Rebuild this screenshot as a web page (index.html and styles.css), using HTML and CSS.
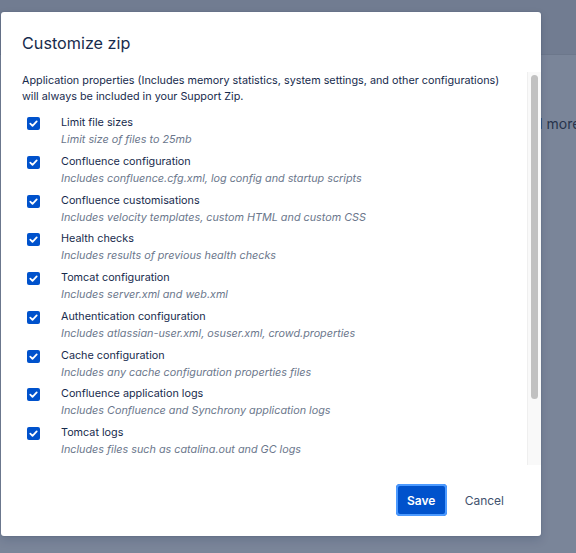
FILE: index.html
```html
<!DOCTYPE html>
<html>
<head>
<meta charset="utf-8">
<link rel="stylesheet" href="styles.css">
</head>
<body>
<div class="page">
  <div class="page-header"></div>
  <div class="page-body">
    <span class="read-more">Read more</span>
  </div>
</div>
<div class="modal">
  <div class="modal-header">Customize zip</div>
  <div class="modal-body">
    <div class="scroll-content">
      <p class="intro">Application properties (Includes memory statistics, system settings, and other configurations) will always be included in your Support Zip.</p>
      <ul class="options">
        <li class="option"><span class="cb"><svg viewBox="0 0 13 13"><path d="M3.3 6.7 L5.5 8.8 L9.7 4.4" fill="none" stroke="#fff" stroke-width="1.8" stroke-linecap="round" stroke-linejoin="round"/></svg></span><div class="text"><div class="label">Limit file sizes</div><div class="desc">Limit size of files to 25mb</div></div></li>
        <li class="option"><span class="cb"><svg viewBox="0 0 13 13"><path d="M3.3 6.7 L5.5 8.8 L9.7 4.4" fill="none" stroke="#fff" stroke-width="1.8" stroke-linecap="round" stroke-linejoin="round"/></svg></span><div class="text"><div class="label">Confluence configuration</div><div class="desc">Includes confluence.cfg.xml, log config and startup scripts</div></div></li>
        <li class="option"><span class="cb"><svg viewBox="0 0 13 13"><path d="M3.3 6.7 L5.5 8.8 L9.7 4.4" fill="none" stroke="#fff" stroke-width="1.8" stroke-linecap="round" stroke-linejoin="round"/></svg></span><div class="text"><div class="label">Confluence customisations</div><div class="desc">Includes velocity templates, custom HTML and custom CSS</div></div></li>
        <li class="option"><span class="cb"><svg viewBox="0 0 13 13"><path d="M3.3 6.7 L5.5 8.8 L9.7 4.4" fill="none" stroke="#fff" stroke-width="1.8" stroke-linecap="round" stroke-linejoin="round"/></svg></span><div class="text"><div class="label">Health checks</div><div class="desc">Includes results of previous health checks</div></div></li>
        <li class="option"><span class="cb"><svg viewBox="0 0 13 13"><path d="M3.3 6.7 L5.5 8.8 L9.7 4.4" fill="none" stroke="#fff" stroke-width="1.8" stroke-linecap="round" stroke-linejoin="round"/></svg></span><div class="text"><div class="label">Tomcat configuration</div><div class="desc">Includes server.xml and web.xml</div></div></li>
        <li class="option"><span class="cb"><svg viewBox="0 0 13 13"><path d="M3.3 6.7 L5.5 8.8 L9.7 4.4" fill="none" stroke="#fff" stroke-width="1.8" stroke-linecap="round" stroke-linejoin="round"/></svg></span><div class="text"><div class="label">Authentication configuration</div><div class="desc">Includes atlassian-user.xml, osuser.xml, crowd.properties</div></div></li>
        <li class="option"><span class="cb"><svg viewBox="0 0 13 13"><path d="M3.3 6.7 L5.5 8.8 L9.7 4.4" fill="none" stroke="#fff" stroke-width="1.8" stroke-linecap="round" stroke-linejoin="round"/></svg></span><div class="text"><div class="label">Cache configuration</div><div class="desc">Includes any cache configuration properties files</div></div></li>
        <li class="option"><span class="cb"><svg viewBox="0 0 13 13"><path d="M3.3 6.7 L5.5 8.8 L9.7 4.4" fill="none" stroke="#fff" stroke-width="1.8" stroke-linecap="round" stroke-linejoin="round"/></svg></span><div class="text"><div class="label">Confluence application logs</div><div class="desc">Includes Confluence and Synchrony application logs</div></div></li>
        <li class="option"><span class="cb"><svg viewBox="0 0 13 13"><path d="M3.3 6.7 L5.5 8.8 L9.7 4.4" fill="none" stroke="#fff" stroke-width="1.8" stroke-linecap="round" stroke-linejoin="round"/></svg></span><div class="text"><div class="label">Tomcat logs</div><div class="desc">Includes files such as catalina.out and GC logs</div></div></li>
      </ul>
    </div>
    <div class="scrollbar"><div class="thumb"></div></div>
  </div>
  <div class="modal-footer">
    <button class="btn btn-primary">Save</button>
    <button class="btn btn-subtle">Cancel</button>
  </div>
</div>
</body>
</html>
```

FILE: styles.css
```css
* { box-sizing: border-box; }
html, body { margin: 0; padding: 0; }
body {
  width: 576px;
  height: 553px;
  overflow: hidden;
  font-family: Inter, "Noto Sans", sans-serif;
  color: #172b4d;
  background: #7a8599;
  position: relative;
}
.page { width: 576px; height: 553px; display: flex; flex-direction: column; }
.page-header { height: 55px; background: #717c91; border-bottom: 1px solid #6c778b; }
.page-body { flex: 1; background: #7a8599; padding: 58px 0 0 509px; white-space: nowrap; overflow: hidden; }
.read-more { font-size: 14px; color: #27344c; white-space: nowrap; }

.modal {
  position: absolute;
  left: 1px;
  top: 12px;
  width: 540px;
  height: 524px;
  background: #fff;
  border-radius: 3px;
  box-shadow: 0 0 2px rgba(9,30,66,0.2), 0 4px 10px rgba(9,30,66,0.15);
  display: flex;
  flex-direction: column;
}
.modal-header {
  padding: 20px 21px 18px;
  font-size: 16.2px;
  line-height: 22px;
  font-weight: 400;
  color: #172b4d;
  height: 60px;
}
.modal-body {
  height: 393px;
  display: flex;
  font-size: 10.8px;
  background: #fff;
}
.scroll-content {
  flex: 1;
  overflow: hidden;
  padding: 1px 18px 0 21px;
}
.scrollbar {
  width: 14px;
  flex: none;
  background: #f9f9f9;
  border-left: 1px solid #efefef;
  padding: 3px 3px 0 3px;
}
.thumb {
  height: 324px;
  background: #c1c1c1;
  border-radius: 4px;
}
.intro { margin: 0; line-height: 16px; color: #172b4d; }
.options { list-style: none; margin: 10px 0 0; padding: 0; display: flex; flex-direction: column; gap: 4.75px; }
.option { display: flex; align-items: flex-start; }
.cb {
  width: 13px;
  height: 13px;
  margin: 2px 0 0 5px;
  background: #0052cc;
  border-radius: 2px;
  display: flex;
  flex: none;
}
.cb svg { width: 13px; height: 13px; }
.text { margin-left: 21px; }
.label { line-height: 16px; color: #172b4d; }
.desc { line-height: 18px; font-style: italic; color: #6b778c; }

.modal-footer {
  flex: 1;
  display: flex;
  align-items: center;
  justify-content: flex-end;
  padding: 0 25px 1px 0;
  gap: 6px;
}
.btn {
  font-family: Inter, "Noto Sans", sans-serif;
  font-size: 12px;
  height: 32px;
  border-radius: 4px;
  border: 0;
  padding: 0 12px;
  cursor: pointer;
}
.btn-primary {
  background: #0052cc;
  color: #fff;
  font-weight: 600;
  width: 51px;
  padding: 0;
  box-shadow: 0 0 0 2px #4c9aff inset;
  outline: 0;
}
.btn-subtle { background: transparent; color: #42526e; }
```
